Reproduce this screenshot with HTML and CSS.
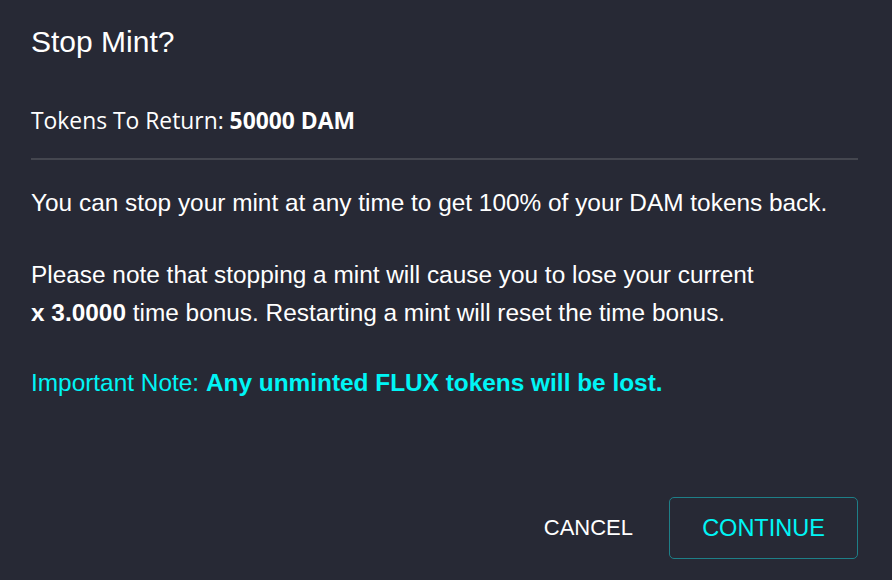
FILE: index.html
```html
<!DOCTYPE html>
<html>
<head>
<meta charset="utf-8">
<link rel="stylesheet" href="styles.css">
</head>
<body>
<div class="dialog">
  <h2 class="title">Stop Mint?</h2>
  <div class="tokens">Tokens To Return: <b>50000 DAM</b></div>
  <hr class="divider">
  <p class="para first">You can stop your mint at any time to get 100% of your DAM tokens back.</p>
  <p class="para second">Please note that stopping a mint will cause you to lose your current<br><b>x 3.0000</b> time bonus. Restarting a mint will reset the time bonus.</p>
  <p class="para note">Important Note: <b>Any unminted FLUX tokens will be lost.</b></p>
  <div class="actions">
    <button class="btn cancel">CANCEL</button>
    <button class="btn continue">CONTINUE</button>
  </div>
</div>
</body>
</html>
```
FILE: styles.css
```css
html, body {
  margin: 0;
  padding: 0;
  background: #272935;
  width: 892px;
  height: 580px;
  overflow: hidden;
}
.dialog {
  box-sizing: border-box;
  height: 580px;
  padding: 24px 34px 0 31px;
  color: #ffffff;
  font-family: "Liberation Sans", Arial, sans-serif;
  display: flex;
  flex-direction: column;
}
.title {
  margin: 0;
  font-weight: 400;
  font-size: 30px;
  line-height: 36px;
}
.tokens {
  margin-top: 47px;
  font-family: "Open Sans", "Noto Sans", sans-serif;
  font-size: 22.85px;
  line-height: 28px;
}
.tokens b { font-weight: 700; }
.divider {
  margin: 23px 0 0 0;
  border: 0;
  height: 2px;
  background: #44464f;
}
.para {
  margin: 0;
  font-size: 24.4px;
  line-height: 38px;
}
.para.first { margin-top: 24px; }
.para.second { margin-top: 34px; }
.para.note { margin-top: 32px; color: #00f5f5; }
.actions {
  margin-top: auto;
  margin-bottom: 21px;
  display: flex;
  justify-content: flex-end;
  align-items: center;
  gap: 36px;
}
.btn {
  font-family: "Liberation Sans", Arial, sans-serif;
  background: transparent;
  cursor: pointer;
}
.cancel {
  font-size: 22px;
  border: 0;
  color: #ffffff;
  padding: 0;
}
.continue {
  font-size: 23.5px;
  width: 189px;
  height: 62px;
  padding: 0;
  border: 1px solid #1e7f88;
  border-radius: 5px;
  color: #00f5f5;
}
```
